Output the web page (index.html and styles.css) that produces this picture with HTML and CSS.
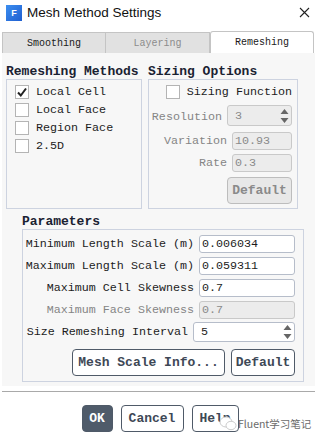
FILE: index.html
```html
<!DOCTYPE html>
<html lang="en">
<head>
    <meta charset="UTF-8">
    <title>Mesh Method Settings</title>
    <link rel="stylesheet" href="styles.css">
</head>
<body>
<div class="dlg">
    <div class="titlebar">
        <span class="logo">F</span>
        <span class="title">Mesh Method Settings</span>
        <svg class="close" width="11" height="11" viewBox="0 0 11 11">
            <path d="M1 1L10 10M10 1L1 10" stroke="#222" stroke-width="1.1" fill="none"/>
        </svg>
    </div>

    <div class="tabs">
        <span class="tab">Smoothing</span>
        <span class="tab off">Layering</span>
        <span class="tab active">Remeshing</span>
    </div>

    <div class="panel">
        <div class="top">
            <div class="group methods">
                <div class="head">Remeshing Methods</div>
                <div class="box">
                    <label class="chk"><span class="cb on"><svg width="12" height="12" viewBox="0 0 12 12"><path d="M2 6.5L4.8 9.5L10 2.5" stroke="#222" stroke-width="2" fill="none"/></svg></span>Local Cell</label>
                    <label class="chk"><span class="cb"></span>Local Face</label>
                    <label class="chk"><span class="cb"></span>Region Face</label>
                    <label class="chk"><span class="cb"></span>2.5D</label>
                </div>
            </div>
            <div class="group sizing">
                <div class="head">Sizing Options</div>
                <div class="box">
                    <label class="chk"><span class="cb"></span>Sizing Function</label>
                    <div class="frow dis">
                        <span>Resolution</span>
                        <div class="spin res dis"><span>3</span>
                            <svg width="9" height="16" viewBox="0 0 9 16"><path d="M4.5 1L8.5 6H0.5Z M4.5 15L8.5 10H0.5Z" fill="#666"/></svg>
                        </div>
                    </div>
                    <div class="frow dis">
                        <span>Variation</span>
                        <span class="field sm dis">10.93</span>
                    </div>
                    <div class="frow dis">
                        <span>Rate</span>
                        <span class="field sm dis">0.3</span>
                    </div>
                    <span class="btn dis">Default</span>
                </div>
            </div>
        </div>

        <div class="group params">
            <div class="head">Parameters</div>
            <div class="box">
                <div class="frow">
                    <span>Minimum Length Scale (m)</span>
                    <span class="field">0.006034</span>
                </div>
                <div class="frow">
                    <span>Maximum Length Scale (m)</span>
                    <span class="field">0.059311</span>
                </div>
                <div class="frow">
                    <span>Maximum Cell Skewness</span>
                    <span class="field">0.7</span>
                </div>
                <div class="frow dis">
                    <span>Maximum Face Skewness</span>
                    <span class="field dis">0.7</span>
                </div>
                <div class="frow">
                    <span>Size Remeshing Interval</span>
                    <div class="spin int"><span>5</span>
                        <svg width="9" height="16" viewBox="0 0 9 16"><path d="M4.5 1L8.5 6H0.5Z M4.5 15L8.5 10H0.5Z" fill="#666"/></svg>
                    </div>
                </div>
                <div class="brow">
                    <span class="btn wide">Mesh Scale Info...</span>
                    <span class="btn">Default</span>
                </div>
            </div>
        </div>
    </div>

    <div class="sep"></div>

    <div class="actions">
        <span class="btn ok">OK</span>
        <span class="btn cancel">Cancel</span>
        <span class="btn help">Help</span>
    </div>

    <div class="mark">
        <svg width="18" height="15" viewBox="0 0 18 15">
            <ellipse cx="7" cy="6" rx="6" ry="5" fill="#fff" stroke="#ccc"/>
            <ellipse cx="12" cy="9.5" rx="5" ry="4.2" fill="#fff" stroke="#ccc"/>
        </svg>
        <span>Fluent学习笔记</span>
    </div>
</div>
</body>
</html>
```

FILE: styles.css
```css
* {
    margin: 0;
    padding: 0;
    box-sizing: border-box;
}

body {
    width: 318px;
    height: 438px;
    background: #fff;
    font-family: "Liberation Mono", "DejaVu Sans Mono", monospace;
    font-size: 11.7px;
    color: #1c1c1c;
    overflow: hidden;
}

.dlg {
    position: relative;
    height: 438px;
}

/* title bar */
.titlebar {
    height: 25px;
    display: flex;
    align-items: center;
    padding-left: 6px;
}

.logo {
    width: 16px;
    height: 16px;
    background: linear-gradient(135deg, #3c8ef0, #1f5fd0);
    color: #fff;
    font-family: "Liberation Sans", Arial, sans-serif;
    font-weight: bold;
    font-size: 9px;
    display: flex;
    align-items: center;
    justify-content: center;
}

.title {
    margin-left: 5px;
    font-family: "Liberation Sans", Arial, sans-serif;
    font-size: 13.5px;
    color: #111;
}

.close {
    margin-left: auto;
    margin-right: 8px;
}

/* tabs */
.tabs {
    display: flex;
    align-items: flex-end;
    height: 28px;
    padding: 0 4px 0 2px;
}

.tab {
    height: 21px;
    width: 104px;
    background: #e1e1e1;
    border: 1px solid #c4c4c4;
    border-bottom: 0;
    font-size: 10px;
    display: flex;
    align-items: center;
    justify-content: center;
    color: #1a1a1a;
}

.tab.off {
    color: #8c8c8c;
    border-left: 0;
}

.tab.active {
    height: 22px;
    width: 104px;
    background: #fff;
    border-radius: 3px 3px 0 0;
}

/* main panel */
.panel {
    margin: 0 3px 0 2px;
    background: #f7f7f7;
    padding: 11px 0 4px 4px;
}

.top {
    display: flex;
    gap: 6px;
}

.head {
    font-size: 13px;
    font-weight: bold;
    line-height: 15px;
    color: #1a2232;
}

.box {
    border: 1px solid #cdd3e0;
}

.methods .box {
    width: 136px;
    height: 130px;
    padding: 3px 0 0 8px;
}

.chk {
    display: flex;
    align-items: center;
    gap: 7px;
    height: 18px;
}

.cb {
    width: 14px;
    height: 14px;
    background: #fff;
    border: 1px solid #b4b4b4;
    display: flex;
    align-items: center;
    justify-content: center;
}

.sizing .box {
    width: 150px;
    height: 130px;
    padding: 5px 5px 0 0;
    display: flex;
    flex-direction: column;
    align-items: flex-end;
}

.sizing .chk {
    height: 14px;
    margin-bottom: 6px;
}

.frow {
    display: flex;
    align-items: center;
    justify-content: flex-end;
    gap: 5px;
}

.frow.dis {
    color: #858585;
}

.sizing .frow {
    margin-bottom: 4px;
}

.field {
    width: 96px;
    height: 18px;
    background: #fff;
    border: 1px solid #b6bdca;
    border-radius: 3px;
    padding-left: 2px;
    line-height: 16px;
}

.field.dis {
    background: #ececec;
    border-color: #c9c9c9;
    color: #8a8a8a;
}

.field.sm {
    width: 60px;
    height: 18px;
}

.spin {
    height: 20px;
    background: #fff;
    border: 1px solid #b6bdca;
    border-radius: 3px;
    display: flex;
    align-items: center;
    justify-content: space-between;
    padding: 0 2px 0 7px;
}

.spin.dis {
    background: #ececec;
    border-color: #c9c9c9;
    color: #8a8a8a;
}

.spin.res {
    width: 65px;
    height: 21px;
    margin-bottom: 2px;
}

.spin.int {
    width: 102px;
}

.btn {
    height: 27px;
    padding: 0 4px;
    border: 1px solid #4f5a68;
    border-radius: 4px;
    font-size: 13px;
    font-weight: bold;
    color: #3e4856;
    display: flex;
    align-items: center;
    justify-content: center;
    background: #fff;
}

.btn.dis {
    width: 65px;
    height: 27px;
    margin-top: 1px;
    background: #e8e8e8;
    border-color: #bdbdbd;
    color: #8a8a8a;
}

.params {
    margin: 5px 0 0 16px;
}

.params .box {
    width: 282px;
    height: 153px;
    padding: 5px 8px 0 0;
    display: flex;
    flex-direction: column;
    gap: 4px;
}

.params .frow {
    height: 18px;
}

.brow {
    display: flex;
    justify-content: flex-end;
    gap: 6px;
    margin-top: 4px;
}

.brow .btn {
    width: 64px;
}

.brow .btn.wide {
    width: 153px;
}

/* bottom */
.sep {
    margin: 5px 3px 0 2px;
    border-top: 1px solid #a9a9a9;
}

.actions {
    display: flex;
    justify-content: center;
    gap: 8px;
    margin-top: 13px;
    padding-left: 2px;
}

.actions .btn {
    padding: 0;
}

.actions .ok {
    width: 31px;
    background: #4f5b6a;
    color: #fff;
}

.actions .cancel {
    width: 63px;
}

.actions .help {
    width: 47px;
}

.mark {
    position: absolute;
    left: 219px;
    top: 416px;
    display: flex;
    align-items: center;
    gap: 1px;
    white-space: nowrap;
    font-family: "Noto Sans CJK SC", "Liberation Sans", sans-serif;
    font-size: 10.5px;
    color: #6a6a6a;
}
```
